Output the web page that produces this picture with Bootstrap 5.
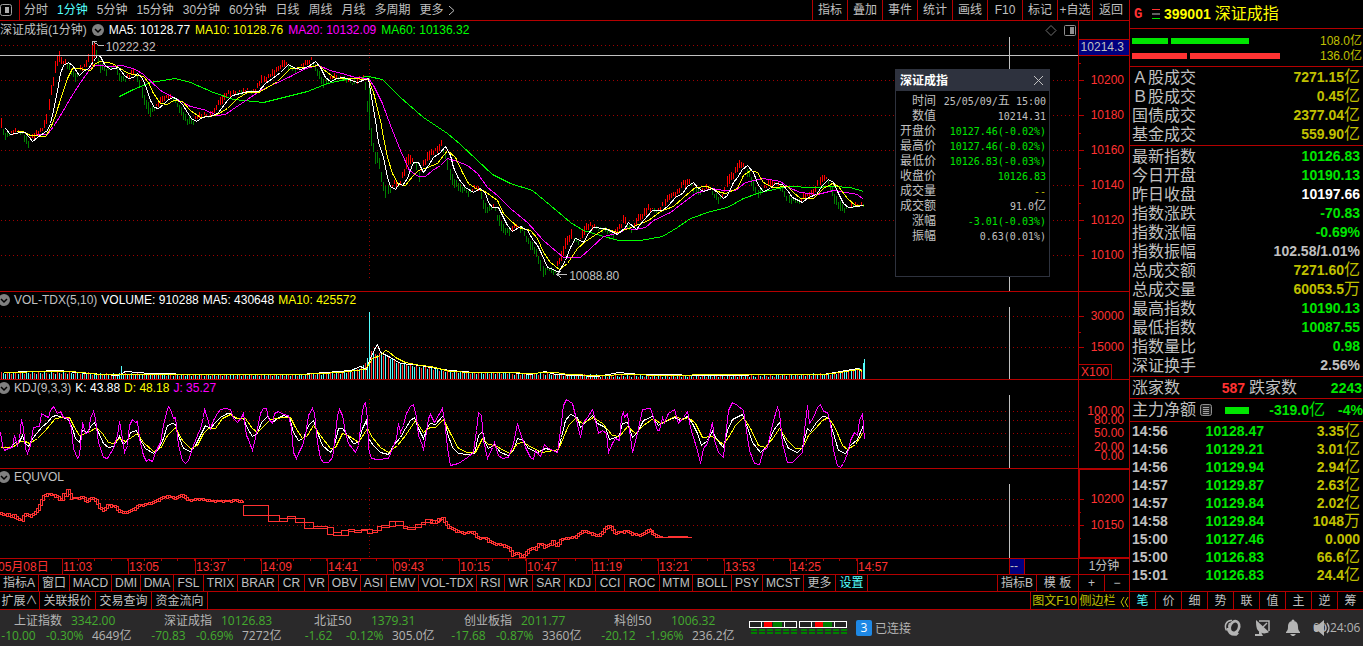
<!DOCTYPE html>
<html lang="zh-CN">
<head>
<meta charset="utf-8">
<meta name="viewport" content="width=device-width, initial-scale=1">
<title>深证成指 399001</title>
<link href="https://cdn.jsdelivr.net/npm/bootstrap@5.3.0/dist/css/bootstrap.min.css" rel="stylesheet">
<style>
:root{--line:#b40000;--red:#ff3232;--txt:#c0c0c0;--cyan:#54ffff;--up:#00e600;--gold:#c0c000;--panel:#2e323e}
body{background:#000;color:var(--txt);font:12px/16px "Liberation Sans","Noto Sans CJK SC",sans-serif;overflow-x:hidden}
button,a{white-space:nowrap}
.bb{border-bottom:1px solid var(--line)}
.flat,.flat:hover{background:none;border:0;border-radius:0;padding:0;color:inherit;font:inherit;line-height:16px;text-decoration:none;text-align:center}
.cyan,.cyan:hover{color:var(--cyan)}
.gold,.gold:hover{color:var(--gold)}
.w{color:#fff}.y{color:#ff0}.m{color:#f0f}.g{color:#0f0}.r{color:var(--red)}.u{color:var(--up)}
/* toolbar */
.bar{height:21px}
.side-toggle{width:19px;padding-left:2px}
.periods{gap:9px;padding-left:4px;border-left:1px solid var(--line)}
.tool{width:35px;border-left:1px solid var(--line)}
.tool:last-child{width:37px}
/* chart panels */
.charts{min-width:0}
.plot{flex:1 1 0;min-width:0;position:relative}
.plot svg,.axis svg{display:block;width:100%;height:100%}
.axis{width:51px;border-left:1px solid var(--line)}
.axis text{fill:var(--red);font-size:12px}
.p-main{height:271px}.p-vol{height:88px}.p-kdj{height:89px}.p-equ{height:90px}
.legend{position:absolute;left:0;top:0;right:0;height:16px;gap:5px;white-space:nowrap}
.p-main .legend{top:1px}
.legend.sub{gap:4px}
.toggle{width:12px;height:12px;flex:none}
.sub .toggle{margin-left:-2px}
.toggle svg{display:block}
.legend .corner-icons{width:31px;height:13px;margin-right:2px}
.mark-lab{position:absolute;line-height:12px}
.selected{border:1px solid var(--line);border-right:0}
svg polyline,svg path.ln{fill:none;stroke-width:1;shape-rendering:crispEdges}
/* data window */
.tip{position:absolute;right:28px;top:48px;width:155px;height:208px;background:#000;border:1px solid var(--panel)}
.tip-head{background:var(--panel);height:21px;padding:0 4px 0 4px}
.tip-head button{width:12px;height:12px}
.tip table{width:100%;margin-top:3px;border-collapse:collapse}
.tip th{width:40px;padding:0;font-weight:400;text-align:right;line-height:15px}
.tip td{padding:0 3px 0 0;text-align:right;line-height:15px;font-family:"DejaVu Sans Mono","Noto Sans CJK SC",monospace;font-size:10px;white-space:pre}
.tip .han{font-size:12px;line-height:1}
/* time scale and tabs */
.times{height:15px;display:grid;grid-template-columns:62fr 66fr 67fr 66fr 66fr 66fr 66fr 67fr 66fr 66fr 66fr 66fr 67fr 152fr 16px 53fr;color:var(--red);line-height:16px}
.times>span{white-space:nowrap;min-width:0;height:15px;border-left:1px solid var(--line)}
.times>span:first-child{border:0;margin-left:-2px}
.times>.tk{background:repeating-linear-gradient(to right,transparent 0 calc(25% - 1px),var(--line) calc(25% - 1px) 25%) 0 0/100% 2px no-repeat}
.times>.cur{background:#000080;color:var(--txt);border-right:1px solid var(--line);line-height:14px}
.corner{width:51px;border-left:1px solid var(--line);text-align:center;line-height:15px}
.tabs{height:16px;display:grid;grid-template-columns:39px 31px 42px 29px 33px 30px 34px 41px 26px 24px 32px 26px 32px 58px 28px 28px 32px 31px 29px 35px 33px 39px 31px 41px 32px 32px}
.tabs .flat,.low .flat{border-right:1px solid var(--line)}
.low{height:17px}
.low .flat{width:56px;line-height:18px}
.low .flat:first-child{width:40px}
.low .book{width:48px}.low .fold{width:51px}
.endtab{border-left:1px solid var(--line)!important;border-right:0!important}
.e1{width:39px}.e2{width:42px}.e3{width:26px}.e4{width:25px}
/* quote panel */
.side{width:234px;border-left:1px solid var(--line);font-size:14px;font-weight:700}
.side .han{font-size:16px;font-weight:400;line-height:1}
.head{height:29px;padding-left:4px}
.head .kind{width:17px;font-family:"Liberation Mono",monospace}
.flow{height:38px;padding:4px 1px 0 2px;font-size:12px;font-weight:400}
.flow>div{height:15px;gap:3px}
.flow i{display:block;height:6px}
.flow .fg{background:var(--up)}.flow .fr{background:var(--red)}
.block{padding:1px 0}
.quote{width:100%;border-collapse:collapse}
.quote th,.quote td{padding:0;line-height:19px;height:19px;white-space:nowrap}
.quote th{font-weight:400;font-size:16px;padding-left:2px}
.quote td{text-align:right;padding-right:3px}
.ticks{table-layout:fixed}
.ticks td{line-height:18px;height:18px}
.ticks td:first-child{text-align:left;padding-left:2px;width:50px}
.ticks td:nth-child(2){width:84px;padding-right:0}
.narrow{height:22px;padding:0 1px 0 2px}
.narrow .cnt{width:65px}
.narrow.main{height:23px;padding-right:0}
.narrow .chip{width:24px;height:7px;background:var(--up);margin-left:13px}
.narrow .pct{width:38px}
.sidetabs{height:18px;border-top:1px solid var(--line);font-size:12px;font-weight:400}
.sidetabs .flat{flex:1 1 0;line-height:18px;border-right:1px solid var(--line)}
.sidetabs .flat:last-child{border:0}
/* status bar */
.status{background:#2a292a;color:#b4b4b4;font-family:"Open Sans","Noto Sans CJK SC",sans-serif;border-top:1px solid var(--line);min-height:37px;padding-top:3px;line-height:15px;white-space:nowrap}
.idx{width:150px;height:30px;color:inherit;text-decoration:none}
.idx b{font-weight:400;color:#44ab2e}
.idx .nm{width:71px;padding-left:14px}
.c1{width:37px;text-align:center}.c2{width:46px;padding-left:9px}.c3{padding-left:9px}
.lights{margin:8px 9px 0 -1px}
.num{width:16px;height:16px;background:#1e88e5;border-radius:2px;font-size:12px;line-height:16px;text-align:center}
.tray{height:30px;gap:3px}
.icons{gap:0}
.tray .flat{width:30px;height:18px}
.clock{position:relative;width:50px;line-height:18px;margin-left:5px}
.clock .flat{position:absolute;left:0;top:0;width:18px}
</style>
</head>
<body>
<div class="d-flex flex-column min-vh-100">
<main class="d-flex">
  <section class="charts flex-grow-1 d-flex flex-column">
    <nav class="bar bb d-flex">
      <button class="flat btn side-toggle d-flex align-items-center" aria-label="侧栏"><svg width="12" height="12"><rect x=".5" y=".5" width="11" height="11" rx="2" fill="none" stroke="#a0a0a0"/><rect x="5" y="3" width="4" height="6" fill="#b0b0b0"/></svg></button>
      <div class="periods d-flex align-items-center flex-grow-1">
        <button class="flat btn">分时</button><button class="flat btn cyan">1分钟</button><button class="flat btn">5分钟</button><button class="flat btn">15分钟</button><button class="flat btn">30分钟</button><button class="flat btn">60分钟</button><button class="flat btn">日线</button><button class="flat btn">周线</button><button class="flat btn">月线</button><button class="flat btn">多周期</button><button class="flat btn d-flex align-items-center">更多<svg class="ms-1" width="7" height="9"><path d="M1 0l5 4.500-5 4.500" fill="none" stroke="#c0c0c0"/></svg></button>
      </div>
      <div class="d-flex" id="tools"></div>
    </nav>

    <div class="p-main bb d-flex">
      <div class="plot">
        <svg viewBox="0 21 1078 270" preserveAspectRatio="none" id="s-main"></svg>
        <div class="legend d-flex align-items-center"><span>深证成指(1分钟)</span>
          <button class="flat btn toggle" aria-label="菜单"><svg width="12" height="12"><circle cx="6" cy="6" r="6" fill="#808080"/><path d="M3 5l3 3 3-3" fill="none" stroke="#000" stroke-width="1.500"/></svg></button>
          <span class="w">MA5: 10128.77</span><span class="y">MA10: 10128.76</span><span class="m">MA20: 10132.09</span><span class="g">MA60: 10136.32</span>
          <svg class="corner-icons ms-auto" viewBox="0 0 31 13"><path d="M6 1.500l5 5-5 5-5-5z" fill="none" stroke="#707070"/><rect x="19.500" y="1.500" width="11" height="10" rx="1" fill="none" stroke="#909090"/><rect x="25" y="3" width="4" height="7" fill="#909090"/></svg>
        </div>
        <span class="mark-lab" style="left:9.8%;top:20px">10222.32</span>
        <span class="mark-lab" style="left:52.8%;top:249px">10088.80</span>
        <aside class="tip">
          <div class="tip-head d-flex align-items-center justify-content-between"><strong class="w">深证成指</strong><button class="flat btn d-flex" aria-label="关闭"><svg width="11" height="11"><path d="M1 1l9 9M10 1l-9 9" stroke="#c0c0c0"/></svg></button></div>
          <table>
            <tr><th>时间</th><td>25/05/09/<span class="han">五</span> 15:00</td></tr>
            <tr><th>数值</th><td>10214.31</td></tr>
            <tr><th>开盘价</th><td class="u">10127.46(-0.02%)</td></tr>
            <tr><th>最高价</th><td class="u">10127.46(-0.02%)</td></tr>
            <tr><th>最低价</th><td class="u">10126.83(-0.03%)</td></tr>
            <tr><th>收盘价</th><td class="u">10126.83</td></tr>
            <tr><th>成交量</th><td class="gold">--</td></tr>
            <tr><th>成交额</th><td>91.0<span class="han">亿</span></td></tr>
            <tr><th>涨幅</th><td class="u">-3.01(-0.03%)</td></tr>
            <tr><th>振幅</th><td>0.63(0.01%)</td></tr>
          </table>
        </aside>
      </div>
      <div class="axis"><svg id="a-main" viewBox="1079 21 50 270"></svg></div>
    </div>

    <div class="p-vol bb d-flex">
      <div class="plot"><svg viewBox="0 292 1078 87" preserveAspectRatio="none" id="s-vol"></svg>
        <div class="legend sub d-flex align-items-center"><button class="flat btn toggle" aria-label="菜单"><svg width="12" height="12"><circle cx="6" cy="6" r="6" fill="#808080"/><path d="M3 5l3 3 3-3" fill="none" stroke="#000" stroke-width="1.500"/></svg></button><span>VOL-TDX(5,10)</span><span class="w">VOLUME: 910288</span><span class="w">MA5: 430648</span><span class="y">MA10: 425572</span></div>
      </div>
      <div class="axis"><svg id="a-vol" viewBox="1079 292 50 87"></svg></div>
    </div>

    <div class="p-kdj bb d-flex">
      <div class="plot"><svg viewBox="0 380 1078 88" preserveAspectRatio="none" id="s-kdj"></svg>
        <div class="legend sub d-flex align-items-center"><button class="flat btn toggle" aria-label="菜单"><svg width="12" height="12"><circle cx="6" cy="6" r="6" fill="#808080"/><path d="M3 5l3 3 3-3" fill="none" stroke="#000" stroke-width="1.500"/></svg></button><span>KDJ(9,3,3)</span><span class="w">K: 43.88</span><span class="y">D: 48.18</span><span class="m">J: 35.27</span></div>
      </div>
      <div class="axis"><svg id="a-kdj" viewBox="1079 380 50 88"></svg></div>
    </div>

    <div class="p-equ bb d-flex">
      <div class="plot"><svg viewBox="0 469 1078 89" preserveAspectRatio="none" id="s-equ"></svg>
        <div class="legend sub d-flex align-items-center"><button class="flat btn toggle" aria-label="菜单"><svg width="12" height="12"><circle cx="6" cy="6" r="6" fill="#808080"/><path d="M3 5l3 3 3-3" fill="none" stroke="#000" stroke-width="1.500"/></svg></button><span>EQUVOL</span></div>
      </div>
      <div class="axis"><div class="selected h-100"><svg id="a-equ" viewBox="1080 470 49 87"></svg></div></div>
    </div>

    <div class="d-flex bb">
      <div class="times flex-grow-1"><span>05月08日</span><span class="tk">11:03</span><span class="tk">13:05</span><span class="tk">13:37</span><span class="tk">14:09</span><span class="tk">14:41</span><span class="tk">09:43</span><span class="tk">10:15</span><span class="tk">10:47</span><span class="tk">11:19</span><span class="tk">13:21</span><span class="tk">13:53</span><span class="tk">14:25</span><span>14:57</span><span class="cur">--</span></div>
      <div class="corner">1分钟</div>
    </div>
    <nav class="d-flex bb">
      <div class="tabs flex-grow-1" id="tabs"></div>
      <div class="d-flex"><button class="flat btn endtab e1">指标B</button><button class="flat btn endtab e2">模 板</button><button class="flat btn endtab e3">+</button><button class="flat btn endtab e4">−</button></div>
    </nav>
    <nav class="low d-flex"><button class="flat btn">扩展∧</button><button class="flat btn">关联报价</button><button class="flat btn">交易查询</button><button class="flat btn">资金流向</button>
      <button class="flat btn endtab book gold ms-auto">图文F10</button><button class="flat btn endtab fold gold">侧边栏<svg class="ms-1" width="9" height="10"><path d="M4 0L1 5l3 5M8 0L5 5l3 5" fill="none" stroke="#c0c000"/></svg></button></nav>
  </section>

  <aside class="side d-flex flex-column">
    <header class="head bb d-flex align-items-center y"><span class="kind r">G</span><svg width="9" height="10" class="flex-shrink-0 me-1"><path d="M1 .5h8" stroke="#ff3232"/><path d="M1 5h8" stroke="#c0c0c0"/><path d="M1 9.500h8" stroke="#00e600"/></svg><span>399001</span><span class="han ms-1">深证成指</span></header>
    <div class="flow bb">
      <div class="d-flex align-items-center"><i class="fg" style="width:36px"></i><i class="fg" style="width:78px"></i><span class="gold ms-auto">108.0亿</span></div>
      <div class="d-flex align-items-center"><i class="fr" style="width:55px"></i><i class="fr" style="width:90px"></i><span class="gold ms-auto">136.0亿</span></div>
    </div>
    <div class="block bb"><table class="quote">
      <tr><th>Ａ股成交</th><td class="gold">7271.15<span class="han">亿</span></td></tr>
      <tr><th>Ｂ股成交</th><td class="gold">0.45<span class="han">亿</span></td></tr>
      <tr><th>国债成交</th><td class="gold">2377.04<span class="han">亿</span></td></tr>
      <tr><th>基金成交</th><td class="gold">559.90<span class="han">亿</span></td></tr>
    </table></div>
    <div class="block bb"><table class="quote">
      <tr><th>最新指数</th><td class="u">10126.83</td></tr>
      <tr><th>今日开盘</th><td class="u">10190.13</td></tr>
      <tr><th>昨日收盘</th><td class="w">10197.66</td></tr>
      <tr><th>指数涨跌</th><td class="u">-70.83</td></tr>
      <tr><th>指数涨幅</th><td class="u">-0.69%</td></tr>
      <tr><th>指数振幅</th><td>102.58/1.01%</td></tr>
      <tr><th>总成交额</th><td class="gold">7271.60<span class="han">亿</span></td></tr>
      <tr><th>总成交量</th><td class="gold">60053.5<span class="han">万</span></td></tr>
      <tr><th>最高指数</th><td class="u">10190.13</td></tr>
      <tr><th>最低指数</th><td class="u">10087.55</td></tr>
      <tr><th>指数量比</th><td class="u">0.98</td></tr>
      <tr><th>深证换手</th><td>2.56%</td></tr>
    </table></div>
    <div class="narrow bb d-flex align-items-center"><span class="han">涨家数</span><span class="cnt r text-end">587</span><span class="han ms-1">跌家数</span><span class="u ms-auto">2243</span></div>
    <div class="narrow main bb d-flex align-items-center"><span class="han">主力净额</span><svg class="flex-shrink-0 ms-1" width="12" height="12"><rect x=".5" y=".5" width="11" height="11" rx="2" fill="#222" stroke="#909090"/><path d="M3 3.500h6M3 5.500h6M3 7.500h6M3 9.500h6" stroke="#a0a0a0" shape-rendering="crispEdges"/></svg><span class="chip"></span><span class="u text-end flex-grow-1">-319.0<span class="han">亿</span></span><span class="pct u text-end">-4%</span></div>
    <table class="quote ticks">
      <tr><td>14:56</td><td class="u">10128.47</td><td class="gold">3.35<span class="han">亿</span></td></tr>
      <tr><td>14:56</td><td class="u">10129.21</td><td class="gold">3.01<span class="han">亿</span></td></tr>
      <tr><td>14:56</td><td class="u">10129.94</td><td class="gold">2.94<span class="han">亿</span></td></tr>
      <tr><td>14:57</td><td class="u">10129.87</td><td class="gold">2.63<span class="han">亿</span></td></tr>
      <tr><td>14:57</td><td class="u">10129.84</td><td class="gold">2.02<span class="han">亿</span></td></tr>
      <tr><td>14:58</td><td class="u">10129.84</td><td class="gold">1048<span class="han">万</span></td></tr>
      <tr><td>15:00</td><td class="u">10127.46</td><td class="gold">0.000</td></tr>
      <tr><td>15:00</td><td class="u">10126.83</td><td class="gold">66.6<span class="han">亿</span></td></tr>
      <tr><td>15:01</td><td class="u">10126.83</td><td class="gold">24.4<span class="han">亿</span></td></tr>
    </table>
    <nav class="sidetabs d-flex mt-auto"><button class="flat btn cyan">笔</button><button class="flat btn">价</button><button class="flat btn">细</button><button class="flat btn">势</button><button class="flat btn">联</button><button class="flat btn">值</button><button class="flat btn">主</button><button class="flat btn">逆</button><button class="flat btn">筹</button></nav>
  </aside>
</main>

<footer class="status flex-grow-1 d-flex align-items-start">
  <div class="d-flex" id="indices"></div>
  <svg class="lights flex-shrink-0" width="98" height="14" shape-rendering="crispEdges" id="lights"></svg>
  <div class="tray d-flex align-items-center"><span class="num w">3</span><span>已连接</span></div>
  <div class="tray icons d-flex align-items-center ms-auto">
    <button class="flat btn" aria-label="客服"><svg width="18" height="18" fill="none" stroke="#b4b4b4"><ellipse cx="10.500" cy="8" rx="4.500" ry="6" transform="rotate(22 10.500 8)" stroke-width="2.600"/><path d="M8 1.500C2 1 0 7 2.500 11.500" stroke-width="1.500"/><path d="M4 9c0 4 3 7 8 6.500l2-2" stroke-width="2.600"/><path d="M5.500 4C4 7 5 12 9 14" stroke-width="1.200"/></svg></button>
    <button class="flat btn" aria-label="行情源"><svg width="18" height="18" fill="#b4b4b4"><path d="M2 1l13 12c-5 3-10 1-12-3-1-3-1-6-1-9z"/><path d="M5 2h10v10" fill="none" stroke="#b4b4b4" stroke-width="1.500"/><path d="M9 8l4-4" stroke="#b4b4b4" stroke-width="1.500"/><path d="M5 12v3H1v2h8l-2-4z"/></svg></button>
    <button class="flat btn" aria-label="消息"><svg width="18" height="18" fill="#b4b4b4"><circle cx="9" cy="2" r="1.500"/><path d="M9 2c-4 0-5 3-5 6 0 3-1 4-2 5v1h14v-1c-1-1-2-2-2-5 0-3-1-6-5-6z"/><path d="M6 15h6l-2 2H8z"/></svg></button>
    <div class="clock">00:24:06<button class="flat btn" aria-label="声音"><svg width="18" height="18"><path d="M1 6h4l6-5v16l-6-5H1z" fill="#b4b4b4"/><path d="M12 6q2 3 0 6M14 4q4 5 0 10" fill="none" stroke="#b4b4b4" stroke-width="1.300"/></svg></button></div>
  </div>
</footer>
</div>

<script src="https://cdn.jsdelivr.net/npm/bootstrap@5.3.0/dist/js/bootstrap.bundle.min.js"></script>
<script>
const $ = id => document.getElementById(id);
$('tools').innerHTML = '指标 叠加 事件 统计 画线 F10 标记 +自选 返回'.split(' ').map(t => `<button class="flat btn tool">${t}</button>`).join('');
$('tabs').innerHTML = '指标A 窗口 MACD DMI DMA FSL TRIX BRAR CR VR OBV ASI EMV VOL-TDX RSI WR SAR KDJ CCI ROC MTM BOLL PSY MCST 更多 设置'.split(' ')
  .map(t => `<button class="flat btn${t === '设置' ? ' cyan' : ''}">${t}</button>`).join('');
$('indices').innerHTML = [
  ['上证指数','3342.00','-10.00','-0.30%','4649亿'],
  ['深证成指','10126.83','-70.83','-0.69%','7272亿'],
  ['北证50','1379.31','-1.62','-0.12%','305.0亿'],
  ['创业板指','2011.77','-17.68','-0.87%','3360亿'],
  ['科创50','1006.32','-20.12','-1.96%','236.2亿']
].map(r => `<a href="#" class="idx"><div class="d-flex"><span class="nm">${r[0]}</span><b>${r[1]}</b></div><div class="d-flex"><b class="c1">${r[2]}</b><b class="c2">${r[3]}</b><span class="c3">${r[4]}</span></div></a>`).join('');

// connection lights
let li = '';
[0, 50].forEach((x, n) => {
  li += `<rect x="${x + .5}" y=".5" width="47" height="6" fill="#222" stroke="#fff"/><rect x="${x + 12}" y="0" width="1" height="7" fill="#fff"/><rect x="${x + 35}" y="0" width="1" height="7" fill="#fff"/>`;
  li += `<rect x="${x + 15 + n}" y="1" width="8" height="5" fill="red"/><rect x="${x + 24}" y="1" width="9" height="5" fill="green"/>`;
  for (let i = 0; i < 6; i++) for (let j = 0; j < 2; j++) li += `<rect x="${x + 2 + i * 8}" y="${8 + j * 3}" width="6" height="2" fill="green"/>`;
});
$('lights').innerHTML = li;

const nums = s => s.trim().split(/\s+/).map(p => p.split(',').map(Number));
const third = (s, x0, y0) => nums(s).map(([x, y]) => [Math.round(x0 + x / 3), Math.round(y0 + y / 3)]);
const poly = (pts, c) => `<polyline points="${pts.map(p => (p[0] + .5) + ',' + (p[1] + .5)).join(' ')}" stroke="${c}"/>`;
const bar = (x, y, w, h, c) => `<rect x="${x}" y="${y}" width="${w}" height="${h}" fill="${c}" shape-rendering="crispEdges"/>`;
const at = (pts, x) => {
  if (x <= pts[0][0]) return pts[0][1];
  for (let i = 1; i < pts.length; i++) if (x <= pts[i][0]) {
    const [a, b] = pts[i - 1], [c, d] = pts[i];
    return c === a ? d : b + (d - b) * (x - a) / (c - a);
  }
  return pts[pts.length - 1][1];
};
function grid(ys, v0, v1) {
  let s = ys.map(y => `<path class="ln" d="M1 ${y + .5}H1075" stroke="#a00000" stroke-dasharray="1 3"/>`).join('');
  return s + (v0 ? `<path class="ln" d="M369.5 ${v0}V${v1}" stroke="#a00000" stroke-dasharray="1 3"/>` : '');
}
const cross = (a, b) => bar(1009, a, 1, b - a, '#c0c0c0');

// price panel
const ma5 = nums(`5,128 10,134 20,132 25,132 32,141 37,137 47,130 50,123 53,110 57,90 60,73 63,65 68,62 72,65 79,75 83,71 88,68 93,61 97,55 100,56 104,64 110,69 118,67 124,75 128,78 133,77 137,73 142,78 146,88 150,100 154,107 158,108 163,104 168,99 173,97 177,99 182,104 187,112 191,118 196,121 202,117 213,115 218,112 227,100 232,95 240,93 248,91 258,91 265,83 272,78 280,72 288,64 293,67 300,69 308,66 315,61 320,67 325,77 330,81 337,78 343,77 357,82 368,78
370,90 375,120 378,142 383,157 387,177 390,186 395,189 399,183 402,185 407,178 409,172 413,162 418,162 423,172 428,165 433,157 440,152 445,146 450,155 453,167 458,178 465,187 473,192 480,188 485,193 488,202 492,207 498,207 503,217 507,225 512,231 520,226 527,230 533,240 537,245 541,253 547,267 553,269 558,272 565,260 570,247 575,238 580,240 583,242 588,233 593,227 603,228
607,229 617,234 625,227 628,222 636,229 643,220 652,210 662,210 668,205 675,197 682,193 687,186 693,182 697,187 703,191 712,188 717,192 723,198 727,195 733,182 737,177 742,169 747,165 753,172 758,185 763,191 770,188 775,183 782,184 787,190 792,197 802,202 808,197 816,194 822,185 828,179 833,182 838,193 843,203 848,207 857,206 863,205`);
const ma10 = nums(`16,131 22,131 30,135 45,136 50,128 55,115 62,93 67,78 72,68 78,68 90,70 95,63 100,61 112,63 118,67 128,73 143,76 148,82 153,93 160,103 167,104 173,100 182,101 190,110 200,117 215,115 227,108 237,98 247,92 258,92 267,87 277,81 290,68 303,67 318,65 327,72 335,78 350,78 368,79 373,92 375,100 380,120 383,137 387,157 392,173 398,184 405,185 412,176 418,170 427,167 437,163 447,150 455,157 462,172 468,183 477,189 483,190 497,200 503,213 510,220 518,227 530,230 537,238 543,252 550,262 559,269 567,263 577,248 585,241 597,233 605,228 617,232 628,228 638,224 648,220 660,211 673,206 683,197 695,187 707,186 717,191 725,193 737,188 743,175 750,170 757,172 763,182 772,187 787,186 793,192 800,198 813,198 823,188 832,183 838,186 847,198 855,205 863,205`);
const ma20 = nums(`36,134 47,134 53,126 60,115 67,103 73,93 80,82 90,68 95,65 112,66 122,65 135,69 143,74 160,90 177,99 190,106 203,109 217,115 225,114 235,107 247,99 260,90 275,83 290,76 305,68 318,65 330,70 345,74 355,77 368,78 373,85 382,103 390,125 400,150 409,170 418,176 425,176 432,170 440,165 447,158 457,161 467,165 477,173 487,187 497,195 510,208 527,222 543,240 563,257 580,257 590,248 603,236 620,232 625,228 635,229 645,227 653,220 670,212 683,202 695,193 712,188 723,190 735,190 745,182 763,178 780,181 788,187 800,192 817,194 833,190 857,194 863,199`);
const ma60 = nums(`119,96 133,89 150,82 175,78 190,82 213,92 233,99 263,102 283,97 307,91 327,83 350,78 368,76 382,79 400,97 423,117 447,133 460,144 477,160 492,174 510,183 532,190 550,205 570,222 583,230 600,235 618,240 640,240 662,236 677,227 690,218 710,211 727,207 743,198 760,192 787,186 813,187 833,186 850,187 863,191`);
let s = grid([45, 80, 115, 150, 185, 220, 255], 41, 279);
for (let i = 0; i < 418; i++) {
  const x = Math.round(1 + i * 2.067);
  if (x > 89 && x < 97 || x === 370) continue;
  const d = at(ma5, x + 4) - at(ma5, x), mid = at(ma5, x) + d * 1.5;
  const len = 1 + ((i * 7919) % 5) * .8 + Math.min(8, Math.abs(d) * .8);
  const noise = ((i * 31) % 7) - 3;
  s += bar(x, Math.round(mid - len / 2 + noise / 2), 1, Math.round(len), d + noise / 2 < 0 ? '#ff0000' : '#008000');
}
s += bar(1, 118, 1, 10, '#f00') + bar(92, 44, 1, 22, '#f00') + bar(94, 41, 1, 17, '#f00') + bar(96, 50, 1, 7, '#008000') + bar(369, 76, 1, 54, '#008000') + bar(371, 132, 1, 14, '#008000');
s += poly(ma60, '#00ff00') + poly(ma20, '#ff00ff') + poly(ma10, '#ffff00') + poly(ma5, '#ffffff');
s += '<path class="ln" d="M104 45.5H99L93 41.5M97 41.5H92.500V45M567 274.500H557M561 277.500L556.500 274.500 561 271" stroke="#c0c0c0"/>';
s += bar(0, 55, 1078, 1, '#c0c0c0') + cross(37, 291);
$('s-main').innerHTML = s;

// volume panel
const env = nums('0,372 60,372 119,373 121,365 122,373 200,374 300,374 350,371 360,367 366,360 368,356 369,312 370,348 375,353 380,353 390,357 400,363 430,367 450,371 480,372 540,373 617,375 618,369 619,375 760,375 830,373 845,370 860,367 862,366 864,359');
const vma10 = nums('4,372 50,371 70,371 100,374 200,374 300,374 340,372 355,370 365,369 372,358 380,355 385,350 388,351 395,357 405,362 420,365 430,366 450,371 473,372 508,372 530,373 545,372 555,372 567,374 597,375 630,374 660,375 723,374 775,374 823,374 840,372 858,369 862,371');
const vma5 = nums('4,372 60,370 75,372 118,375 125,371 150,373 200,374 300,374 350,370 360,366 366,369 370,358 375,347 377,344 380,352 390,357 400,363 420,365 430,367 450,370 475,372 510,372 530,374 545,371 555,374 597,376 618,372 640,374 723,375 775,374 823,374 840,371 858,368 862,371');
s = grid([316, 347]);
for (let i = 0; i < 418; i++) {
  const x = Math.round(1 + i * 2.067);
  const jit = x === 369 ? 0 : (i * 13) % 3;
  const y = Math.round(at(env, x)) + jit;
  s += bar(x, y, 1, 379 - y, ((i * 5) % 11 < 5 && x !== 121) ? '#ff3232' : '#54ffff');
}
s += bar(369, 312, 1, 67, '#54ffff') + poly(vma5, '#fff') + poly(vma10, '#ff0') + bar(864, 359, 1, 20, '#54ffff') + cross(307, 379);
$('s-vol').innerHTML = s;

// KDJ panel, plotted on a three-per-pixel scale
const J = third('0,440 5,480 12,495 25,490 35,485 42,450 50,480 58,460 62,402 68,430 75,490 82,505 90,480 95,440 100,425 118,422 122,385 132,390 145,395 150,375 158,362 170,385 180,378 190,395 205,400 212,430 220,490 230,520 236,510 242,450 247,410 255,445 265,440 270,400 278,378 285,400 295,470 310,515 322,518 340,490 350,450 358,408 365,460 372,500 380,480 388,420 395,403 405,410 412,408 418,460 428,510 438,528 445,522 455,528 465,500 480,470 490,420 497,380 503,362 510,372 518,400 525,395 535,480 545,525 555,535 565,525 580,480 592,450 600,430 610,395 613,368 620,400 630,430 640,405 650,385 660,372 675,370 690,372 700,400 712,412 722,395 730,385 737,450 745,462 755,495 762,470 772,430 780,385 790,370 798,370 805,400 815,415 822,385 835,378 850,388 865,390 872,430 880,500 888,518 895,505 905,480 915,450 925,390 935,370 943,385 950,470 960,520 970,530 985,530 995,515 1003,470 1010,390 1017,373 1025,390 1035,440 1045,475 1055,490 1065,500 1075,480 1082,400 1090,360 1096,352 1100,400 1105,490 1112,520 1130,522 1165,518 1175,490 1188,460 1195,415 1200,440 1210,420 1218,385 1230,362 1240,358 1248,395 1255,450 1265,480 1270,495 1275,460 1283,400 1290,388', 0, 285)
  .concat(third('0,222 12,245 25,225 35,205 42,240 50,320 60,375 85,370 110,350 130,335 138,270 145,215 152,225 160,300 172,355 185,320 192,305 205,345 215,355 235,350 248,310 260,250 270,280 285,320 300,350 310,358 315,330 330,348 342,312 355,325 380,335 390,270 398,195 408,178 425,188 435,225 450,290 460,245 472,230 485,208 495,240 503,278 515,270 528,280 533,335 545,310 555,295 567,300 572,230 578,212 583,230 590,218 600,290 607,335 620,280 635,208 660,205 670,230 680,270 688,270 695,230 702,245 715,218 732,208 745,250 758,230 770,212 780,260 790,290 802,330 810,368 820,325 832,310 845,245 852,300 865,335 878,350 885,290 895,210 905,185 920,195 938,210 948,270 958,330 972,370 988,372 1000,330 1010,320 1020,280 1030,240 1042,200 1048,215 1055,310 1070,365 1085,365 1100,350 1115,335 1122,270 1130,195 1138,248 1150,230 1160,200 1170,192 1178,212 1190,215 1200,250 1210,330 1220,375 1230,382 1240,370 1250,340 1260,300 1272,275 1280,285 1288,240 1297,218 1302,298', 430, 340));
const K = third('0,487 30,487 45,472 55,475 65,450 75,475 85,482 95,460 110,440 125,422 140,410 155,392 168,390 185,395 205,402 215,430 225,460 236,470 247,435 260,442 272,420 283,412 295,440 310,475 325,485 340,482 350,465 358,452 370,478 380,465 390,440 408,435 418,460 435,490 458,505 475,492 488,460 500,420 515,415 525,418 535,450 550,490 570,498 585,480 600,450 615,420 630,428 645,412 660,395 680,385 690,385 705,400 730,400 740,430 755,452 770,445 782,410 800,392 815,412 830,398 850,390 868,395 880,440 895,465 910,460 925,420 940,405 950,440 965,480 990,500 1002,480 1015,430 1025,430 1040,450 1060,475 1075,470 1085,430 1097,405 1105,460 1120,480 1140,500 1165,508 1180,480 1200,455 1215,430 1230,405 1242,395 1255,430 1270,458 1283,420', 0, 285)
  .concat(third('0,250 15,252 38,225 50,280 65,320 85,340 110,342 132,338 145,285 155,272 165,310 175,325 192,312 210,335 235,345 248,330 260,295 278,300 295,325 320,335 345,325 382,332 392,290 405,240 420,222 440,232 450,260 465,245 485,225 500,250 525,262 538,298 555,290 567,285 575,250 590,245 607,292 620,275 640,240 665,228 685,255 700,245 732,230 750,240 770,228 785,250 800,280 812,315 830,300 845,272 860,300 880,322 892,270 905,238 935,222 950,260 965,305 990,335 1010,315 1030,270 1047,245 1058,290 1075,325 1100,335 1117,320 1130,265 1140,272 1158,245 1175,228 1195,232 1210,280 1225,330 1245,338 1260,315 1280,298 1297,262 1300,270', 430, 340));
const D = third('0,487 35,487 60,468 75,468 88,475 110,460 135,435 165,400 185,395 208,395 222,425 238,450 265,442 288,425 305,445 325,472 340,475 358,460 375,468 410,445 430,470 460,497 480,490 500,450 525,425 545,465 570,490 590,480 610,445 625,430 645,428 665,400 690,388 710,398 735,400 755,430 770,440 785,425 810,402 850,395 870,397 885,425 905,458 920,450 940,420 960,450 990,490 1005,485 1025,445 1045,450 1075,470 1100,430 1115,455 1140,485 1165,500 1190,480 1215,450 1245,405 1270,440 1285,428', 0, 285)
  .concat(third('0,262 15,260 38,238 60,280 85,325 110,337 135,335 155,295 175,312 195,315 220,330 240,340 262,310 280,305 310,325 335,335 385,328 400,290 415,255 435,235 455,248 490,232 515,250 545,285 567,287 590,258 615,278 640,255 668,235 690,248 735,228 755,238 775,230 795,250 815,290 845,288 880,312 895,290 915,255 940,232 960,265 985,315 1005,322 1030,290 1048,265 1070,300 1095,325 1115,325 1135,285 1155,265 1175,240 1195,232 1215,265 1235,315 1250,328 1275,312 1297,280', 430, 340));
$('s-kdj').innerHTML = grid([411, 420, 433, 446, 455], 399, 468) + poly(K, '#fff') + poly(D, '#ff0') + poly(J, '#f0f') + cross(395, 468);

// equal-volume boxes
const box = (x1, y1, x2, y2) => `<rect x="${x1 + .5}" y="${y1 + .5}" width="${x2 - x1}" height="${y2 - y1}" fill="none" stroke="#ff3232" shape-rendering="crispEdges"/>`;
const walk = (pts) => {
  let o = '';
  const end = pts[pts.length - 1][0];
  for (let x = pts[0][0]; x < end; x += 2) {
    const a = Math.round(at(pts, x)), b = Math.round(at(pts, x + 2));
    o += box(x, Math.min(a, b), Math.min(x + 2, end), Math.max(a, b) + (x % 8 < 6 ? 1 : 2));
  }
  return o;
};
s = grid([499, 525], 488, 558);
s += walk(third('0,125 15,135 25,128 35,138 45,130 52,145 65,148 75,130 90,135 105,128 115,115 122,95 130,78 145,70 158,72 170,75 182,90 192,70 200,78 205,58 215,80 230,80 250,78 260,92 272,80 288,88 300,110 315,118 325,102 345,105 355,118 370,127 400,118 420,102 445,100 465,92 485,80 505,74 525,80 548,72 565,88 600,85 640,90 690,90 705,87 730,92', 0, 470));
[[730,106,803,136],[803,136,836,152],[836,145,862,152],[862,139,886,145],[886,145,911,156],[911,156,938,175],[938,167,980,175],[980,172,1000,192],[1000,186,1022,196],[1022,180,1043,196],[1043,178,1062,184],[1062,180,1082,187],[1082,178,1100,181],[1100,178,1115,190],[1115,180,1130,187],[1130,167,1142,180],[1142,165,1168,172],[1168,153,1185,167],[1185,153,1208,165],[1208,167,1220,175],[1220,170,1245,178],[1245,162,1262,172],[1262,155,1275,162],[1275,148,1297,156],[1297,150,1312,160],[1312,145,1320,152]]
  .forEach(b => { const q = b.map((v, i) => Math.round(v / 3) + (i % 2 ? 470 : 0)); s += box(...q); });
s += walk(third('20,122 27,115 38,110 48,130 60,140 80,150 100,157 130,152 145,170 165,170 185,185 205,190 225,195 240,205 250,222 262,215 280,228 290,213 305,200 315,205 330,185 345,198 360,192 370,180 380,195 395,175 420,172 440,165 462,148 480,155 500,165 515,155 530,138 540,132 555,155 590,150 610,160 630,163 645,155 660,145 670,158 690,168', 430, 480));
s += poly(third('660,145 670,158 690,167 705,172 720,169 760,169 782,172', 430, 480), '#ff3232') + poly(third('690,170 720,172 782,172', 430, 480), '#ff3232') + box(430, 520, 435, 523);
$('s-equ').innerHTML = s + cross(484, 558);

// value axes
const lab = (y, t) => `<text x="1124" y="${y + 4}" text-anchor="end">${t}</text>`;
const tick = (y, w) => bar(1079, y, w, 1, '#b40000');
s = bar(1079, 39, 50, 17, '#b40000') + bar(1079, 40, 50, 15, '#000080') + '<text x="1124" y="51" text-anchor="end" style="fill:#c0c0c0">10214.3</text>';
[10200, 10180, 10160, 10140, 10120, 10100].forEach((v, i) => { const y = 80 + i * 35; s += tick(y, 5) + tick(y - 17, 2) + lab(y, v); });
$('a-main').innerHTML = s;
$('a-vol').innerHTML = tick(316, 5) + tick(332, 2) + tick(347, 5) + lab(316, 30000) + lab(347, 15000)
  + '<path class="ln" d="M1079 364.500H1111.500V379" stroke="#b40000"/><text x="1081" y="376">X100</text>';
$('a-kdj').innerHTML = lab(411, '100.00') + lab(420, '80.00') + lab(433, '50.00') + lab(447, '20.00') + lab(456, '0.00');
$('a-equ').innerHTML = tick(499, 5) + tick(512, 2) + tick(525, 5) + tick(538, 2) + lab(499, 10200) + lab(525, 10150);
</script>
</body>
</html>
